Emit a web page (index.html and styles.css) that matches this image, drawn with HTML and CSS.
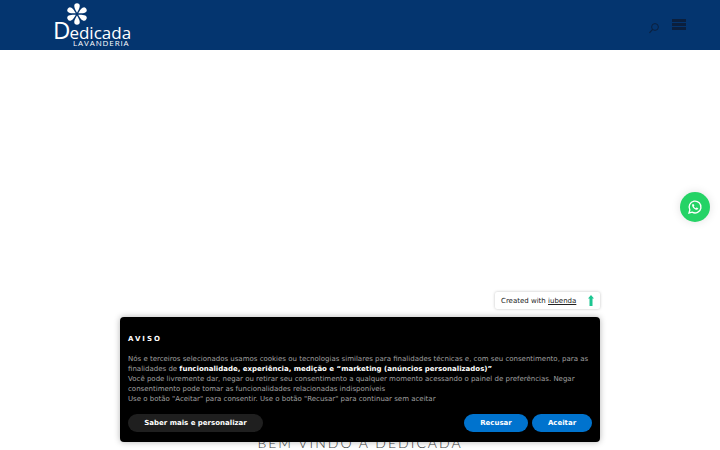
FILE: index.html
```html
<!DOCTYPE html>
<html lang="pt">
<head>
    <meta charset="UTF-8">
    <meta name="viewport" content="width=device-width, initial-scale=1.0">
    <title>Dedicada Lavanderia</title>
    <link rel="stylesheet" href="styles.css">
</head>
<body>
    <header class="topbar">
        <a class="logo" href="#">
            <svg class="logo-flower" viewBox="0 0 24 24" aria-hidden="true">
                <g fill="#fff">
                    <path id="petal" d="M12 10.500C10.500 8 9 5.500 9 3.300A3 3 0 0 1 15 3.300C15 5.500 13.500 8 12 10.500z"/>
                    <use href="#petal" transform="rotate(60 12 12)"/>
                    <use href="#petal" transform="rotate(120 12 12)"/>
                    <use href="#petal" transform="rotate(180 12 12)"/>
                    <use href="#petal" transform="rotate(240 12 12)"/>
                    <use href="#petal" transform="rotate(300 12 12)"/>
                </g>
            </svg>
            <span class="logo-name"><span class="logo-cap">D</span>edicada</span>
            <span class="logo-sub">LAVANDERIA</span>
        </a>
        <div class="topbar-icons">
            <svg class="icon-search" viewBox="0 0 12 12" aria-hidden="true">
                <circle cx="7" cy="5" r="3.400" fill="none" stroke="#0b1f3d" stroke-width="1"/>
                <path d="M4.600 7.400 1.500 10.800" stroke="#0b1f3d" stroke-width="1.100" fill="none"/>
            </svg>
            <div class="icon-menu"><span></span><span></span><span></span></div>
        </div>
    </header>

    <main class="content">
        <h2 class="welcome">BEM VINDO À DEDICADA</h2>
    </main>

    <a class="whatsapp" href="#" aria-label="WhatsApp">
        <svg viewBox="0 0 24 24" width="16" height="16" aria-hidden="true">
            <path fill="none" stroke="#fff" stroke-width="2" d="M3 21l1.300-4.600A8.900 8.900 0 1 1 7.700 19.800z"/>
            <path fill="#fff" d="M9 7.400c-.5 0-1.300.7-1.300 2 0 2.800 3.600 6.800 6.900 6.800 1.500 0 2.300-1 2.300-1.800 0-.5-2-1.600-2.500-1.600-.4 0-.8 1-1.200 1-.9 0-3-2.100-3-3 0-.4.800-.8.800-1.200 0-.5-1.100-2.200-2-2.200z"/>
        </svg>
    </a>

    <div class="iubenda-tag">
        <span>Created with <u>iubenda</u></span>
        <svg viewBox="0 0 6 11" width="6" height="11" aria-hidden="true">
            <path fill="#1cc691" d="M3 0 6 3.500H4.500V11H1.500V3.500H0z"/>
        </svg>
    </div>

    <section class="cookie-banner">
        <h3 class="cookie-title">AVISO</h3>
        <p class="cookie-text">
            Nós e terceiros selecionados usamos cookies ou tecnologias similares para finalidades técnicas e, com seu consentimento, para as finalidades de <strong>funcionalidade, experiência, medição e “marketing (anúncios personalizados)”</strong><br>
            Você pode livremente dar, negar ou retirar seu consentimento a qualquer momento acessando o painel de preferências. Negar consentimento pode tomar as funcionalidades relacionadas indisponíveis<br>
            Use o botão "Aceitar" para consentir. Use o botão "Recusar" para continuar sem aceitar
        </p>
        <div class="cookie-actions">
            <button class="btn btn-dark">Saber mais e personalizar</button>
            <div class="cookie-choices">
                <button class="btn btn-blue btn-refuse">Recusar</button>
                <button class="btn btn-blue btn-accept">Aceitar</button>
            </div>
        </div>
    </section>
</body>
</html>
```

FILE: styles.css
```css
html, body {
    margin: 0;
    padding: 0;
    height: 450px;
    overflow: hidden;
    background: #fff;
    font-family: "DejaVu Sans", sans-serif;
}

.topbar {
    height: 50px;
    background: #04356f;
    display: flex;
    justify-content: space-between;
    padding: 0 34px 0 53px;
}

.logo {
    position: relative;
    width: 80px;
    height: 50px;
    color: #fff;
    text-decoration: none;
    display: block;
}
.logo-flower {
    position: absolute;
    left: 13px;
    top: 3px;
    width: 22px;
    height: 22px;
}
.logo-name {
    position: absolute;
    left: 0;
    top: 18px;
    font-family: "Open Sans", sans-serif;
    font-size: 17px;
    line-height: 24px;
}
.logo-cap {
    font-size: 24px;
    letter-spacing: -1px;
}
.logo-sub {
    position: absolute;
    left: 20px;
    top: 38px;
    font-family: "Open Sans", sans-serif;
    font-size: 8px;
    line-height: 9px;
    letter-spacing: 0.9px;
}

.topbar-icons {
    display: flex;
    gap: 12px;
    padding-top: 19px;
}
.icon-search {
    width: 12px;
    height: 12px;
    margin-top: 3px;
}
.icon-menu {
    width: 14px;
    display: flex;
    flex-direction: column;
    gap: 1.500px;
}
.icon-menu span {
    height: 2.500px;
    background: #0b1f3d;
}

.content {
    height: 400px;
    position: relative;
    display: flex;
    justify-content: center;
    align-items: flex-end;
}
.welcome {
    margin: 0;
    font-family: Lato, sans-serif;
    font-size: 14px;
    line-height: 15px;
    font-weight: 300;
    letter-spacing: 2px;
    color: #444;
}

.whatsapp {
    position: absolute;
    left: 680px;
    top: 192px;
    width: 30px;
    height: 30px;
    border-radius: 50%;
    background: #25d366;
    display: flex;
    align-items: center;
    justify-content: center;
    box-shadow: 0 0 10px rgba(0, 0, 0, 0.12);
}

.iubenda-tag {
    position: absolute;
    left: 495px;
    top: 292px;
    width: 105px;
    height: 17px;
    box-sizing: border-box;
    padding: 0 6px;
    display: flex;
    align-items: center;
    justify-content: space-between;
    background: #fff;
    border-radius: 2px;
    box-shadow: 0 0 3px rgba(0, 0, 0, 0.25);
    font-size: 7px;
    color: #222;
}

.cookie-banner {
    position: absolute;
    left: 120px;
    top: 317px;
    width: 480px;
    height: 125px;
    box-sizing: border-box;
    padding: 18px 8px 0;
    background: #000;
    border-radius: 4px;
    box-shadow: 0 0 6px rgba(0, 0, 0, 0.3);
    color: #fff;
}
.cookie-title {
    margin: 0;
    font-size: 7px;
    line-height: 9px;
    font-weight: bold;
    letter-spacing: 2px;
}
.cookie-text {
    margin: 10px 0 0;
    font-size: 7px;
    line-height: 10px;
    color: #a0a0a0;
}
.cookie-text strong {
    color: #fff;
}
.cookie-actions {
    margin-top: 10px;
    display: flex;
    justify-content: space-between;
}
.cookie-choices {
    display: flex;
    gap: 4px;
}
.btn {
    height: 18px;
    padding: 0;
    border: none;
    border-radius: 9px;
    font-family: inherit;
    font-size: 7px;
    font-weight: bold;
    color: #fff;
}
.btn-dark {
    width: 135px;
    background: #1f1f1f;
}
.btn-blue {
    background: #0073ce;
}
.btn-refuse {
    width: 64px;
}
.btn-accept {
    width: 60px;
}
```
